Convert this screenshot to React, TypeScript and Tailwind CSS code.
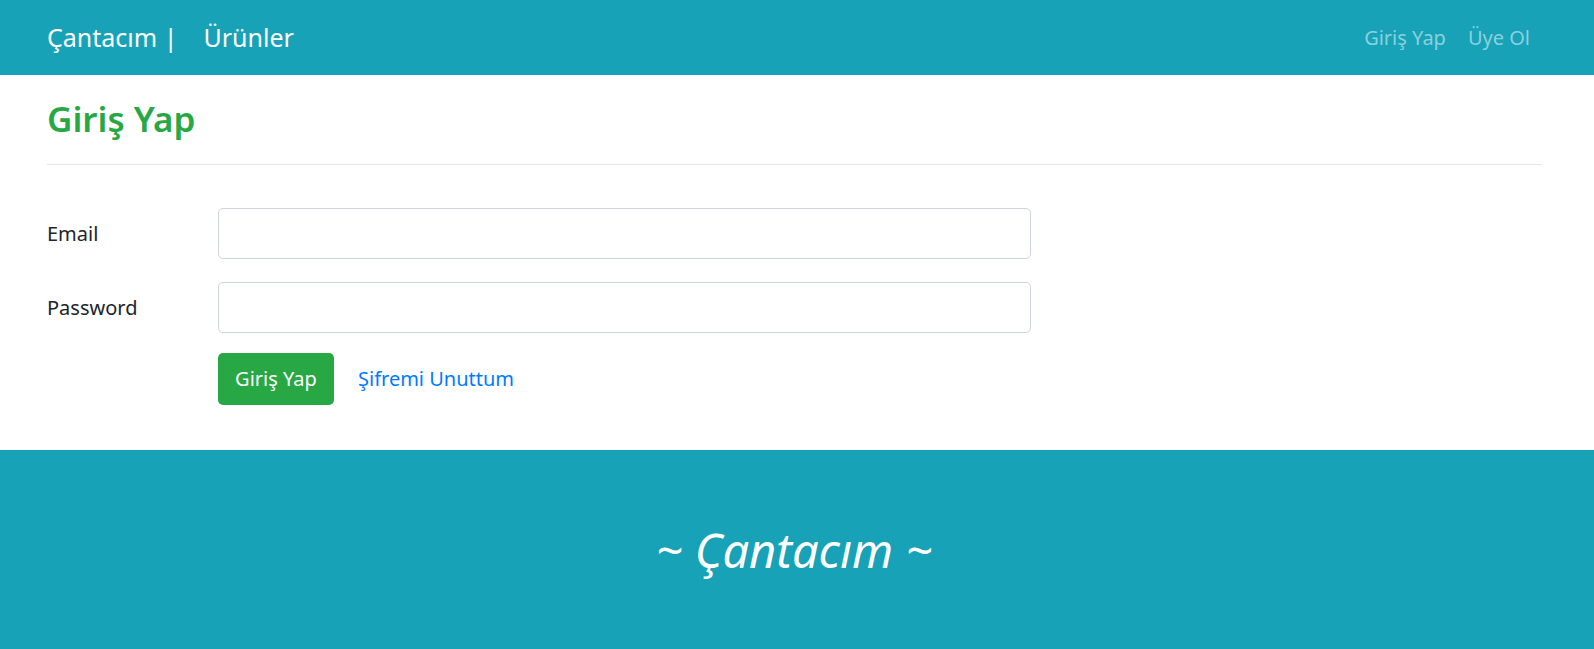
export default function App() {
  return (
    <div className="min-h-[649px] flex flex-col bg-white" style={{ fontFamily: '"Noto Sans", "Open Sans", sans-serif' }}>
      {/* Navbar */}
      <nav className="h-[75px] bg-[#17a2b8] flex items-center justify-between pl-[47px] pr-[64px]">
        <div className="flex items-center text-[25px]">
          <span className="text-white">Çantacım |</span>
          <span className="text-white ml-[26px]">Ürünler</span>
        </div>
        <div className="flex items-center gap-[22px] text-[20px] text-[#8bd1dc]">
          <span>Giriş Yap</span>
          <span>Üye Ol</span>
        </div>
      </nav>

      {/* Login form */}
      <main className="flex-1 pl-[47px] pr-[52px] pt-[22px] pb-[45px]">
        <h2 className="text-[35px] font-semibold text-[#28a745] leading-[44px]">Giriş Yap</h2>
        <hr className="mt-[23px] border-t border-[#e5e5e5]" />

        <div className="mt-[43px] flex flex-col gap-[23px]">
          <div className="flex items-center">
            <label className="w-[171px] text-[20px] text-[#212529]">Email</label>
            <input type="email" className="w-[813px] h-[51px] border border-[#ced4da] rounded-[5px] px-3 outline-none" />
          </div>
          <div className="flex items-center">
            <label className="w-[171px] text-[20px] text-[#212529]">Password</label>
            <input type="password" className="w-[813px] h-[51px] border border-[#ced4da] rounded-[5px] px-3 outline-none" />
          </div>
          <div className="flex items-center pl-[171px] -mt-[3px]">
            <button className="w-[116px] h-[52px] bg-[#28a745] text-white text-[20px] rounded-[5px]">Giriş Yap</button>
            <a className="ml-[24px] text-[20px] text-[#007bff]">Şifremi Unuttum</a>
          </div>
        </div>
      </main>

      {/* Footer */}
      <footer className="h-[200px] bg-[#17a2b8] flex items-center justify-center">
        <p className="italic text-white text-[47px] -ml-[6px]">~ Çantacım ~</p>
      </footer>
    </div>
  );
}
